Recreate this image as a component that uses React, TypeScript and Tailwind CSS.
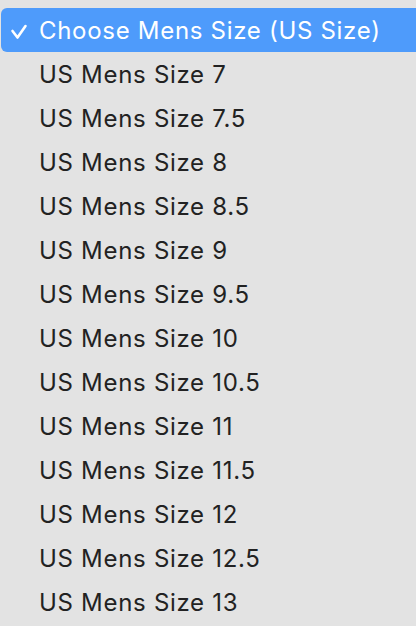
const sizes = ["7", "7.5", "8", "8.5", "9", "9.5", "10", "10.5", "11", "11.5", "12", "12.5", "13"];

export default function App() {
  return (
    <div className="w-[416px] h-[626px] overflow-hidden bg-[#e3e3e3] pt-2 font-['Inter',sans-serif] text-[24px] tracking-[0.7px]">
      <div className="relative ml-px mr-[-8px] h-11 flex items-center rounded-[6px] bg-[#4e9bfb] text-white pl-[38px] pt-px">
        <svg className="absolute left-0 top-0" width="38" height="44" viewBox="0 0 38 44">
          <path d="M11.5 23 L16.5 29.5 L24.5 18" fill="none" stroke="white" strokeWidth="2.6" strokeLinecap="round" strokeLinejoin="round" />
        </svg>
        <span>Choose Mens Size (US Size)</span>
      </div>
      {sizes.map((s) => (
        <div key={s} className="h-11 flex items-center pl-[39px] pt-px text-[#222222]">
          US Mens Size {s}
        </div>
      ))}
    </div>
  );
}
